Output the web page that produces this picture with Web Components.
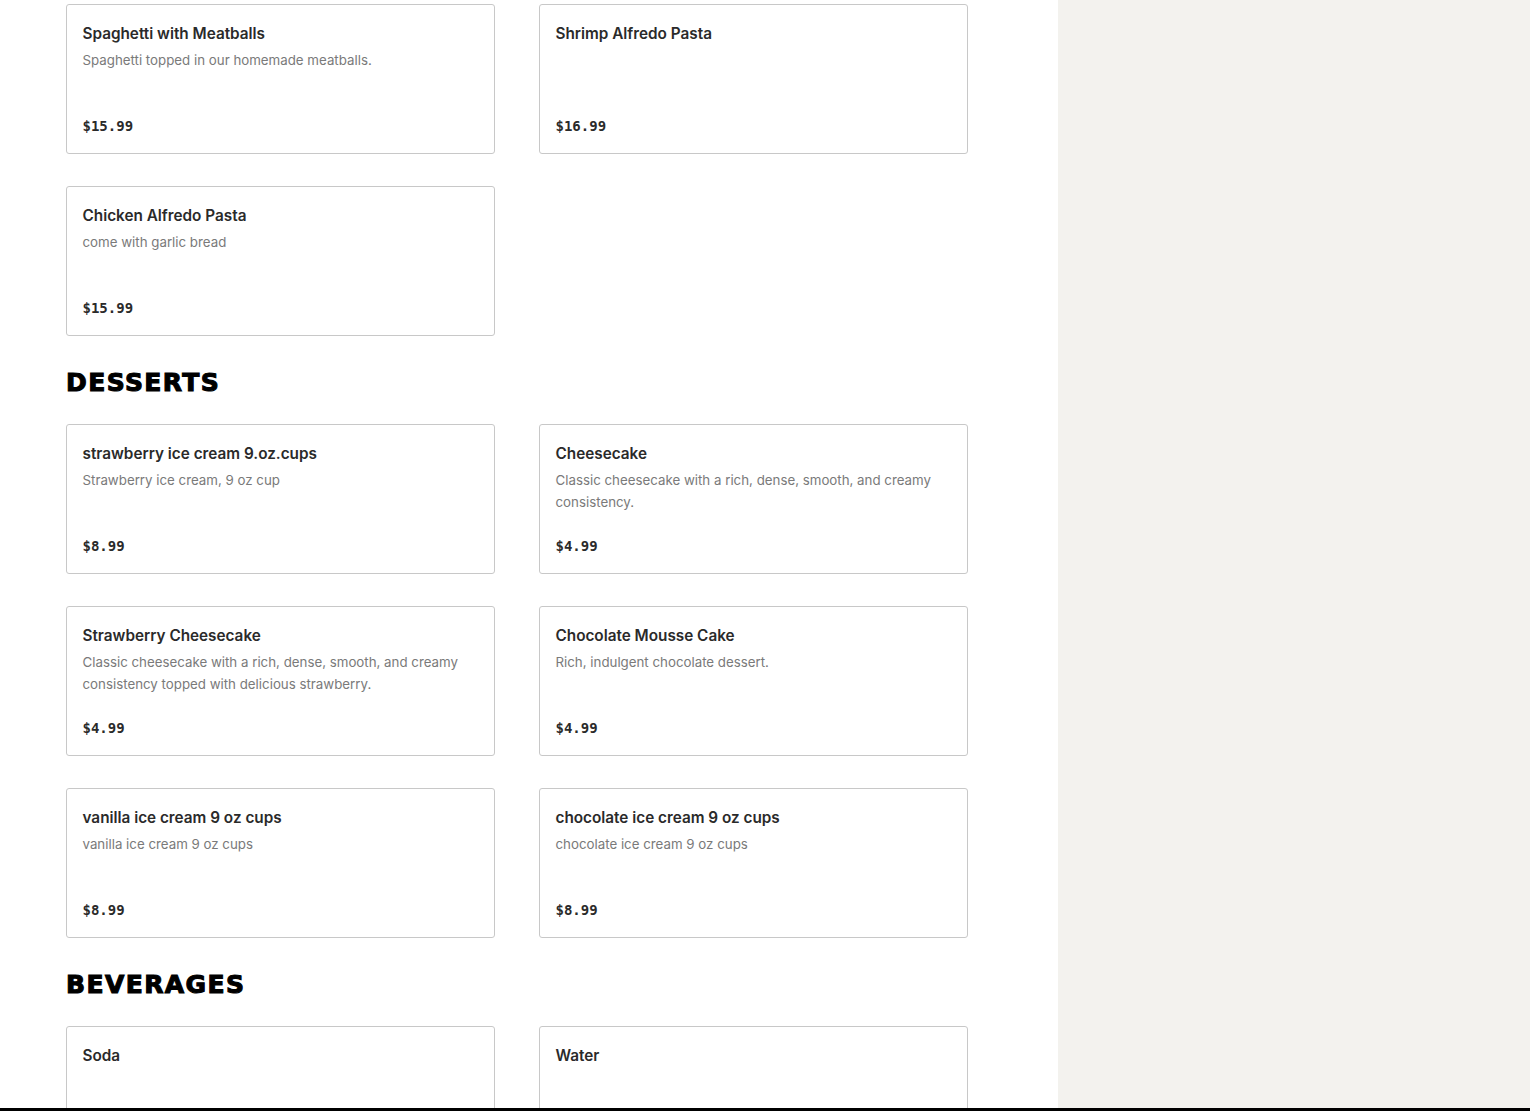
<!DOCTYPE html>
<html>
<head>
<meta charset="utf-8">
<title>Menu</title>
<style>
  html, body { margin: 0; height: 100%; overflow: hidden; background: #fff; }
</style>
</head>
<body>
<menu-page>
  <menu-grid>
    <menu-item name="Spaghetti with Meatballs" description="Spaghetti topped in our homemade meatballs." price="$15.99"></menu-item>
    <menu-item name="Shrimp Alfredo Pasta" price="$16.99"></menu-item>
    <menu-item name="Chicken Alfredo Pasta" description="come with garlic bread" price="$15.99"></menu-item>
  </menu-grid>
  <menu-section title="DESSERTS">
    <menu-item name="strawberry ice cream 9.oz.cups" description="Strawberry ice cream, 9 oz cup" price="$8.99"></menu-item>
    <menu-item name="Cheesecake" description="Classic cheesecake with a rich, dense, smooth, and creamy consistency." price="$4.99"></menu-item>
    <menu-item name="Strawberry Cheesecake" description="Classic cheesecake with a rich, dense, smooth, and creamy consistency topped with delicious strawberry." price="$4.99"></menu-item>
    <menu-item name="Chocolate Mousse Cake" description="Rich, indulgent chocolate dessert." price="$4.99"></menu-item>
    <menu-item name="vanilla ice cream 9 oz cups" description="vanilla ice cream 9 oz cups" price="$8.99"></menu-item>
    <menu-item name="chocolate ice cream 9 oz cups" description="chocolate ice cream 9 oz cups" price="$8.99"></menu-item>
  </menu-section>
  <menu-section title="BEVERAGES">
    <menu-item name="Soda" price=""></menu-item>
    <menu-item name="Water" price=""></menu-item>
  </menu-section>
</menu-page>

<script>
class MenuPage extends HTMLElement {
  constructor() {
    super();
    const shadowRoot = this.attachShadow( {mode: 'open'} );
    shadowRoot.innerHTML = `
      <style>
        :host {
          display: flex;
          flex-direction: column;
          height: 1111px;
          box-sizing: border-box;
          border-bottom: solid 3px #000;
          overflow: hidden;
        }
        .columns {
          display: flex;
          flex: 1;
          min-height: 0;
        }
        main {
          box-sizing: border-box;
          flex: 0 0 1058px;
          padding: 4px 90px 0 66px;
          overflow: hidden;
        }
        aside {
          flex: 1;
          background: #f3f2ee;
        }
      </style>
      <div class="columns">
        <main><slot></slot></main>
        <aside></aside>
      </div>
    `;
  }
}

class MenuGrid extends HTMLElement {
  constructor() {
    super();
    const shadowRoot = this.attachShadow( {mode: 'open'} );
    shadowRoot.innerHTML = `
      <style>
        :host {
          display: grid;
          grid-template-columns: 429px 429px;
          column-gap: 44px;
          row-gap: 32px;
        }
      </style>
      <slot></slot>
    `;
  }
}

class MenuSection extends HTMLElement {
  constructor() {
    super();
    const shadowRoot = this.attachShadow( {mode: 'open'} );
    shadowRoot.innerHTML = `
      <style>
        :host {
          display: block;
        }
        h2 {
          color: #000;
          font-family: 'DejaVu Sans', sans-serif;
          font-size: 25px;
          font-weight: 700;
          -webkit-text-stroke: 1.1px #000;
          height: 30px;
          letter-spacing: 1.4px;
          line-height: 30px;
          margin: 32px 0 26px 0;
        }
        .grid {
          display: grid;
          grid-template-columns: 429px 429px;
          column-gap: 44px;
          row-gap: 32px;
        }
      </style>
      <h2></h2>
      <div class="grid"><slot></slot></div>
    `;
    shadowRoot.querySelector( 'h2' ).textContent = this.getAttribute( 'title' );
  }
}

class MenuItem extends HTMLElement {
  constructor() {
    super();
    const shadowRoot = this.attachShadow( {mode: 'open'} );
    shadowRoot.innerHTML = `
      <style>
        :host {
          display: block;
          background: #fff;
          border: solid 1px #c8c8c8;
          border-radius: 3px;
          box-sizing: border-box;
          height: 150px;
          padding: 17px 16px 16px 15.5px;
          position: relative;
        }
        .name {
          color: #2a2a2a;
          font-family: 'Inter', sans-serif;
          font-size: 15.3px;
          font-weight: 600;
          line-height: 24px;
        }
        .description {
          color: #7a7a7a;
          font-family: 'Inter', sans-serif;
          font-size: 13.3px;
          line-height: 22px;
          margin-top: 3px;
        }
        .price {
          bottom: 16px;
          color: #2a2a2a;
          font-family: 'DejaVu Sans Mono', monospace;
          font-size: 14px;
          font-weight: 700;
          left: 15.5px;
          line-height: 22px;
          position: absolute;
        }
      </style>
      <div class="name"></div>
      <div class="description"></div>
      <div class="price"></div>
    `;
    shadowRoot.querySelector( '.name' ).textContent = this.getAttribute( 'name' );
    shadowRoot.querySelector( '.description' ).textContent = this.getAttribute( 'description' ) || '';
    shadowRoot.querySelector( '.price' ).textContent = this.getAttribute( 'price' ) || '';
  }
}

window.customElements.define( 'menu-page', MenuPage );
window.customElements.define( 'menu-grid', MenuGrid );
window.customElements.define( 'menu-section', MenuSection );
window.customElements.define( 'menu-item', MenuItem );
</script>
</body>
</html>
